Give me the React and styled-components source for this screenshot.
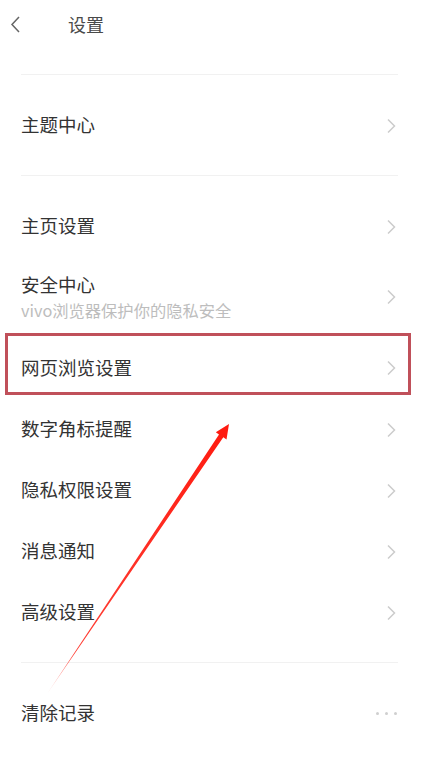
import React from 'react'
import styled, { createGlobalStyle } from 'styled-components'

const GlobalStyle = createGlobalStyle`
  body {
    margin: 0;
    background: #fff;
    font-family: "Noto Sans CJK SC", "Noto Sans", sans-serif;
  }
`

const Page = styled.div`
  position: relative;
  width: 421px;
  height: 759px;
  overflow: hidden;
  background: #fff;
`

const Header = styled.div`
  height: 48px;
  display: flex;
  align-items: center;
  padding-left: 10px;
`

const BackButton = styled.div`
  width: 58px;
  display: flex;
  align-items: center;
`

const Title = styled.div`
  font-size: 18px;
  color: #4a4a4a;
  line-height: 24px;
  margin-top: -1px;
`

const Divider = styled.div`
  height: 1px;
  margin: 0 23px 0 21px;
  background: #f1f1f1;
`

const Section = styled.div`
  padding: ${p => p.$top}px 0 ${p => p.$bottom}px;
`

const Row = styled.div`
  position: relative;
  height: ${p => p.$height || 61}px;
  display: flex;
  align-items: center;
  justify-content: space-between;
  padding: 0 25px 0 21px;
  box-sizing: border-box;
`

const Texts = styled.div`
  display: flex;
  flex-direction: column;
  gap: 4px;
  margin-top: -3px;
`

const Label = styled.div`
  font-size: 18.5px;
  line-height: 24px;
  color: #333;
`

const Sub = styled.div`
  font-size: 16.3px;
  line-height: 20px;
  color: #bdbdbd;
`

const Highlight = styled.div`
  position: absolute;
  top: -4px;
  bottom: 4px;
  left: 5px;
  right: 10px;
  border: 3px solid #c0505a;
  pointer-events: none;
`

const Dots = styled.div`
  display: flex;
  gap: 6px;
  margin-right: -1px;
`

const Dot = styled.span`
  width: 3px;
  height: 3px;
  border-radius: 50%;
  background: #cfcfcf;
`

const Overlay = styled.svg`
  position: absolute;
  left: 0;
  top: 0;
  pointer-events: none;
`

const Chevron = () => (
  <svg width="10" height="16" viewBox="0 0 10 16">
    <path d="M2 1.5 L8.5 8 L2 14.5" fill="none" stroke="#cccccc" strokeWidth="1.5" />
  </svg>
)

const BackIcon = () => (
  <svg width="11" height="17" viewBox="0 0 11 17">
    <path d="M9 1 L2 8.5 L9 16" fill="none" stroke="#666" strokeWidth="1.5" />
  </svg>
)

const Item = ({ label, sub, highlight, height }) => (
  <Row $height={height}>
    <Texts>
      <Label>{label}</Label>
      {sub && <Sub>{sub}</Sub>}
    </Texts>
    <Chevron />
    {highlight && <Highlight />}
  </Row>
)

const Arrow = () => (
  <Overlay width="421" height="759" viewBox="0 0 421 759">
    <defs>
      <linearGradient id="fade" x1="47" y1="694" x2="229" y2="424" gradientUnits="userSpaceOnUse">
        <stop offset="0" stopColor="#ff3b30" stopOpacity="0.2" />
        <stop offset="0.15" stopColor="#ff2a1f" stopOpacity="0.9" />
        <stop offset="1" stopColor="#ff1a0f" />
      </linearGradient>
    </defs>
    <polygon
      points="47,694 223.3,437.2 226.5,439.5 229,424 215.8,432.2 219,434.5"
      fill="url(#fade)"
    />
  </Overlay>
)

export default function App () {
  return (
    <Page>
      <GlobalStyle />
      <Header>
        <BackButton><BackIcon /></BackButton>
        <Title>设置</Title>
      </Header>
      <Section $top={26} $bottom={0} />
      <Divider />
      <Section $top={20} $bottom={19}>
        <Item label='主题中心' />
      </Section>
      <Divider />
      <Section $top={20} $bottom={19}>
        <Item label='主页设置' />
        <Item label='安全中心' sub='vivo浏览器保护你的隐私安全' height={80} />
        <Item label='网页浏览设置' highlight height={62} />
        <Item label='数字角标提醒' />
        <Item label='隐私权限设置' />
        <Item label='消息通知' />
        <Item label='高级设置' />
      </Section>
      <Divider />
      <Section $top={20} $bottom={0}>
        <Row>
          <Texts>
            <Label>清除记录</Label>
          </Texts>
          <Dots><Dot /><Dot /><Dot /></Dots>
        </Row>
      </Section>
      <Arrow />
    </Page>
  )
}
